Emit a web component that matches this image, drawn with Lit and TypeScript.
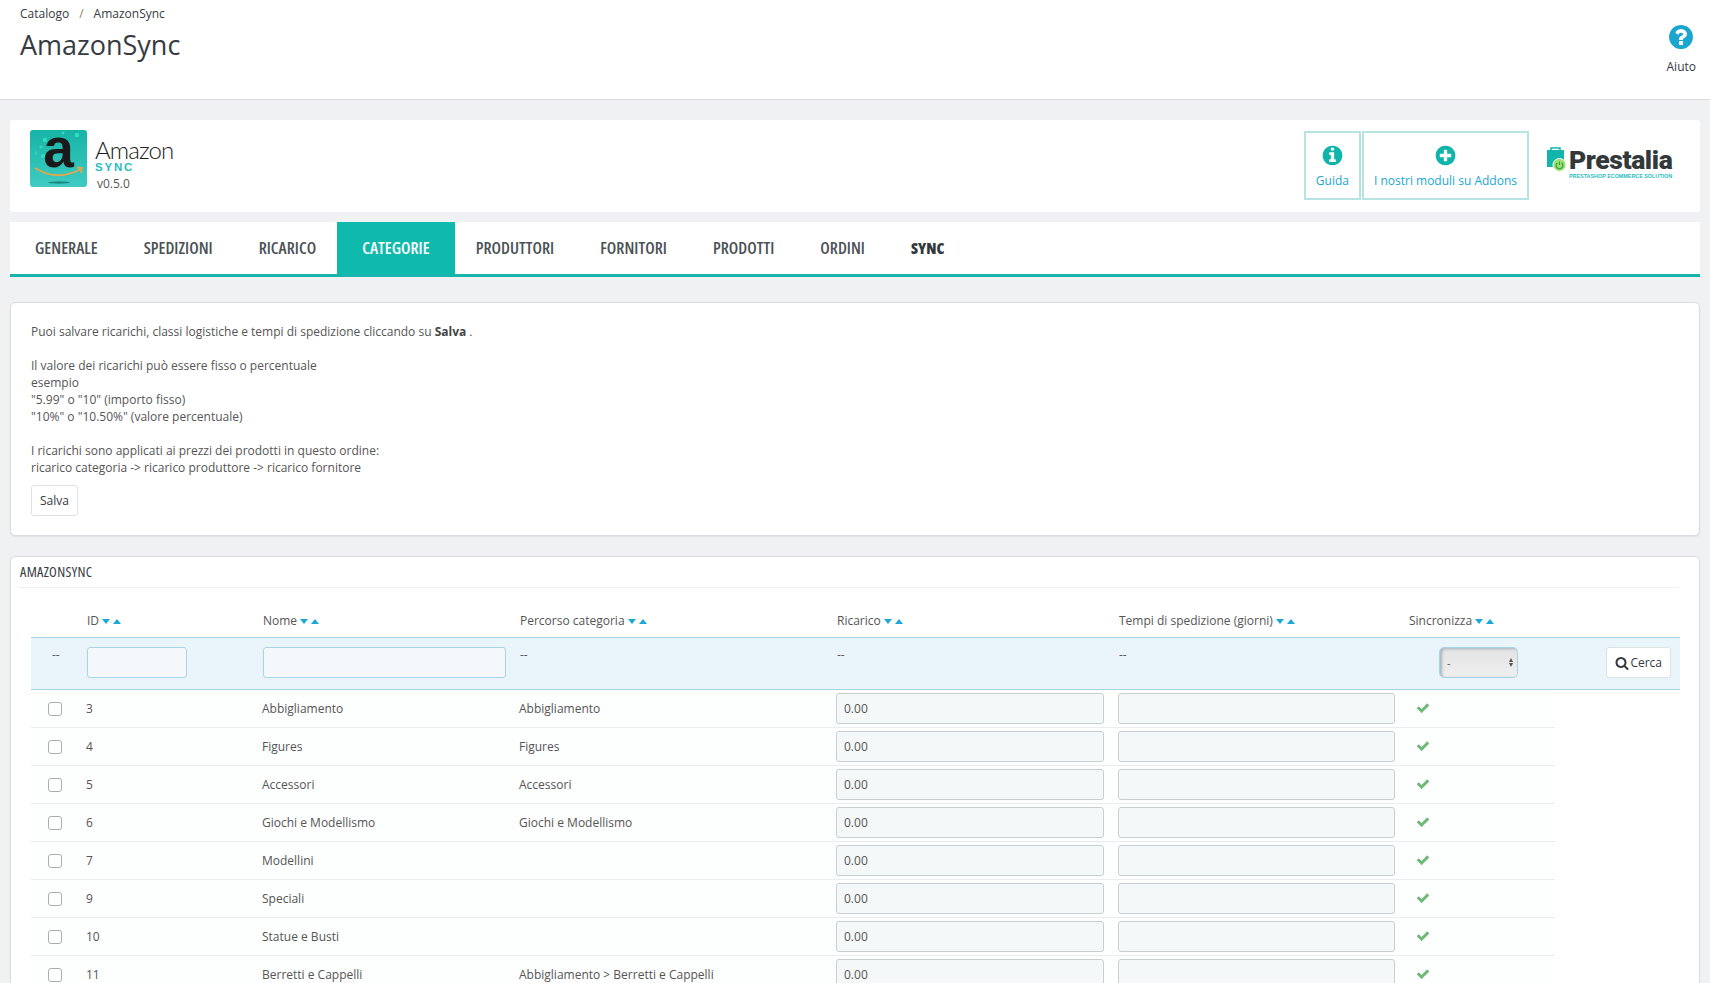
import { LitElement, html, css, svg } from 'lit';
import { customElement } from 'lit/decorators.js';

const ICONS = {
  check: 'M1671 566q0 40-28 68l-724 724-136 136q-28 28-68 28t-68-28l-136-136-362-362q-28-28-28-68t28-68l136-136q28-28 68-28t68 28l294 295 656-657q28-28 68-28t68 28l136 136q28 28 28 68z',
  search: 'M1216 832q0-185-131.5-316.5t-316.5-131.5-316.5 131.5-131.5 316.5 131.5 316.5 316.5 131.5 316.5-131.5 131.5-316.5zm512 832q0 52-38 90t-90 38q-54 0-90-38l-343-342q-179 124-399 124-143 0-273.5-55.5t-225-150-150-225-55.5-273.5 55.5-273.5 150-225 225-150 273.5-55.5 273.5 55.5 225 150 150 225 55.5 273.5q0 220-124 399l343 343q37 37 37 90z',
  plus: 'M1344 960v-128q0-26-19-45t-45-19h-256v-256q0-26-19-45t-45-19h-128q-26 0-45 19t-19 45v256h-256q-26 0-45 19t-19 45v128q0 26 19 45t45 19h256v256q0 26 19 45t45 19h128q26 0 45-19t19-45v-256h256q26 0 45-19t19-45zm320-64q0 209-103 385.5t-279.5 279.5-385.5 103-385.5-103-279.5-279.5-103-385.5 103-385.5 279.5-279.5 385.5-103 385.5 103 279.5 279.5 103 385.5z',
  info: 'M1152 1376v-160q0-14-9-23t-23-9h-96v-512q0-14-9-23t-23-9h-320q-14 0-23 9t-9 23v160q0 14 9 23t23 9h96v320h-96q-14 0-23 9t-9 23v160q0 14 9 23t23 9h448q14 0 23-9t9-23zm-128-896v-160q0-14-9-23t-23-9h-192q-14 0-23 9t-9 23v160q0 14 9 23t23 9h192q14 0 23-9t9-23zm640 416q0 209-103 385.5t-279.5 279.5-385.5 103-385.5-103-279.5-279.5-103-385.5 103-385.5 279.5-279.5 385.5-103 385.5 103 279.5 279.5 103 385.5z',
  question: 'M1024 1376v-192q0-14-9-23t-23-9h-192q-14 0-23 9t-9 23v192q0 14 9 23t23 9h192q14 0 23-9t9-23zm256-672q0-88-55.5-163t-138.5-116-170-41q-243 0-371 213-15 24 8 42l132 100q7 6 19 6 16 0 25-12 53-68 86-92 34-24 86-24 48 0 85.5 26t37.5 59q0 38-20 61t-68 45q-63 28-115.5 86.5t-52.5 125.5v36q0 14 9 23t23 9h192q14 0 23-9t9-23q0-19 21.5-49.5t54.5-49.5q32-18 49-28.5t46-35 44.5-48 28-60.5 12.5-81zm384 192q0 209-103 385.5t-279.5 279.5-385.5 103-385.5-103-279.5-279.5-103-385.5 103-385.5 279.5-279.5 385.5-103 385.5 103 279.5 279.5 103 385.5z',
};

const icon = (name: keyof typeof ICONS, size: number) => html`
  <svg width=${size} height=${size} viewBox="0 0 1792 1792" fill="currentColor"><path d=${ICONS[name]}></path></svg>`;

const TABS = ['GENERALE', 'SPEDIZIONI', 'RICARICO', 'CATEGORIE', 'PRODUTTORI', 'FORNITORI', 'PRODOTTI', 'ORDINI', 'SYNC'];

const COLS = [
  { label: '', w: 49 },
  { label: 'ID', w: 176 },
  { label: 'Nome', w: 257 },
  { label: 'Percorso categoria', w: 317 },
  { label: 'Ricarico', w: 282 },
  { label: 'Tempi di spedizione (giorni)', w: 290 },
  { label: 'Sincronizza', w: 153 },
  { label: '', w: 125 },
];

const ROWS = [
  ['3', 'Abbigliamento', 'Abbigliamento'],
  ['4', 'Figures', 'Figures'],
  ['5', 'Accessori', 'Accessori'],
  ['6', 'Giochi e Modellismo', 'Giochi e Modellismo'],
  ['7', 'Modellini', ''],
  ['9', 'Speciali', ''],
  ['10', 'Statue e Busti', ''],
  ['11', 'Berretti e Cappelli', 'Abbigliamento > Berretti e Cappelli'],
];

@customElement('app-root')
export class AppRoot extends LitElement {
  static styles = css`
    :host {
      display: block;
      height: 983px;
      overflow: hidden;
      background: #eff1f2;
      font-family: 'Open Sans', sans-serif;
      font-size: 12px;
      color: #555;
    }
    .head {
      background: #fff;
      height: 99px;
      border-bottom: 1px solid #d9dcde;
      display: flex;
      justify-content: space-between;
      padding: 0 14px 0 20px;
    }
    .crumb {
      margin-top: 6px;
      line-height: 16px;
      color: #363a41;
      display: flex;
      gap: 10px;
    }
    .crumb i { font-style: normal; color: #7a8a5a; }
    h1 {
      margin: 3px 0 0;
      font-size: 27px;
      line-height: 40px;
      font-weight: 400;
      color: #363a41;
    }
    .help {
      display: flex;
      flex-direction: column;
      align-items: center;
      padding-top: 23px;
      color: #363a41;
      gap: 8px;
      line-height: 16px;
    }
    .help svg { color: #1ba6cf; display: block; }
    .brand {
      box-sizing: border-box;
      margin: 20px 10px 0;
      height: 92px;
      background: #fff;
      border-radius: 3px;
      display: flex;
      align-items: flex-start;
      padding: 10px 28px 0 20px;
    }
    .logo { position: relative; width: 57px; height: 57px; margin-right: 8px; flex-shrink: 0; }
    .logo svg { display: block; }
    .logo span {
      position: absolute;
      left: 0;
      top: 0;
      width: 57px;
      text-align: center;
      font: 700 55px/36px 'Liberation Sans', sans-serif;
      color: #1a1a1a;
    }
    .name { margin-top: 7px; color: #222; }
    .name b { display: block; font: 300 24px/26px Lato, sans-serif; letter-spacing: -0.9px; }
    .name em {
      display: block;
      font: 700 11.5px/11px 'Liberation Sans', sans-serif;
      letter-spacing: 1.8px;
      color: #2bbcc0;
      margin-top: -1px;
    }
    .name span { display: block; font-size: 12px; line-height: 16px; color: #555; margin: 3px 0 0 2px; }
    .links { margin-left: auto; display: flex; gap: 1px; padding-top: 1px; }
    .links a {
      box-sizing: border-box;
      height: 69px;
      border: 2px solid #b8e3e3;
      display: flex;
      flex-direction: column;
      align-items: center;
      padding: 11px 10px 0;
      color: #1ba6cf;
      gap: 5px;
      line-height: 18px;
    }
    .links svg { color: #0fb5aa; display: block; }
    .presta { margin: 17px 0 0 18px; width: 125px; }
    .presta .top { display: flex; align-items: flex-end; height: 25px; }
    .presta .top svg { flex-shrink: 0; margin-right: 2px; }
    .presta strong {
      font: 900 26.5px/24px Roboto, sans-serif;
      color: #33383a;
      letter-spacing: -0.4px;
    }
    .presta small {
      display: block;
      font: 700 5.4px/8px 'Liberation Sans', sans-serif;
      color: #2bbcc0;
      margin: 0 0 0 22px;
      white-space: nowrap;
    }
    .tabs {
      margin: 10px 10px 0;
      height: 52px;
      background: #fff;
      border-bottom: 3px solid #17b5ac;
      display: flex;
      padding-left: 2px;
    }
    .tabs a {
      font: 600 16.7px/52px 'Open Sans', sans-serif;
      font-stretch: 75%;
      letter-spacing: 0.02px;
      color: #4b5155;
      padding: 0 23px;
    }
    .tabs a.on { background: #0fb9ab; color: #fff; padding: 0 25px; margin: 0 -2px; }
    .tabs a.sync { color: #33383a; font-weight: 800; font-size: 15.6px; }
    .panel {
      margin: 25px 10px 0;
      background: #fff;
      border: 1px solid #d9dcde;
      border-radius: 5px;
      box-shadow: 0 1px 1px #e1e3e5;
    }
    .note { height: 234px; padding: 20px 20px 0; box-sizing: border-box; line-height: 17px; }
    .note p { margin: 0 0 17px; }
    .note b { color: #444; }
    .btn {
      display: inline-flex;
      align-items: center;
      gap: 3px;
      height: 31px;
      box-sizing: border-box;
      padding: 0 8px;
      background: #fff;
      border: 1px solid #dfe2e4;
      border-radius: 3px;
      color: #363a41;
      font: inherit;
    }
    .note .btn { display: flex; margin-top: -8px; }
    .list { margin-top: 20px; padding: 0 20px 0 8px; height: 440px; }
    .list h2 {
      margin: 0;
      padding-left: 1px;
      height: 30px;
      border-bottom: 1px solid #eef0f1;
      font: 500 14.2px/29px 'Open Sans', sans-serif;
      font-stretch: 75%;
      letter-spacing: 0.35px;
      color: #363a41;
    }
    table {
      table-layout: fixed;
      border-collapse: collapse;
      width: 1649px;
      margin: 8px 0 0 12px;
    }
    th { font-weight: 400; text-align: left; height: 34px; padding: 7px 0 0 7px; vertical-align: middle; color: #555; white-space: nowrap; }
    .sort { display: inline-flex; gap: 3px; margin-left: 3px; vertical-align: 1px; }
    .sort i { width: 0; height: 0; border: 4.5px solid transparent; }
    .sort i:first-child { border-top: 5px solid #1aa9d6; border-bottom: 0; }
    .sort i:last-child { border-bottom: 5px solid #1aa9d6; border-top: 0; }
    .filter td {
      background: #e9f5fa;
      border-top: 1px solid #a8d3e3;
      border-bottom: 1px solid #a8d3e3;
      height: 51px;
      padding: 0 0 0 7px;
      vertical-align: top;
    }
    .filter .dash { display: block; padding-top: 9px; line-height: 16px; color: #555; }
    .filter input {
      display: block;
      box-sizing: border-box;
      height: 31px;
      margin-top: 9px;
      background: #f4f8fa;
      border: 1px solid #a9d4e6;
      border-radius: 3px;
    }
    .sel {
      box-sizing: border-box;
      width: 79px;
      height: 31px;
      margin: 9px 0 0 30px;
      border: 1px solid #a9d4e6;
      border-radius: 5px;
      background: linear-gradient(#e3e3e3, #efefef);
      box-shadow: inset 2px 1px 3px #a9b4bc;
      display: flex;
      align-items: center;
      justify-content: space-between;
      padding: 0 4px 0 7px;
      font-size: 11px;
    }
    .sel span { display: flex; flex-direction: column; gap: 1px; }
    .sel i { width: 0; height: 0; border: 2.5px solid transparent; }
    .sel i:first-child { border-bottom: 4px solid #555; border-top: 0; }
    .sel i:last-child { border-top: 4px solid #555; border-bottom: 0; }
    .filter .go { text-align: right; padding-right: 9px; }
    .go .btn { margin-top: 9px; height: 31px; padding: 0 8px; gap: 1px; }
    .go svg { color: #363a41; display: block; }
    tbody tr.row td {
      height: 37px;
      padding: 0 0 0 6px;
      border-bottom: 1px solid #eaedef;
      background: #fdfefe;
      vertical-align: middle;
    }
    .cb {
      display: block;
      width: 12px;
      height: 12px;
      margin: 0 0 0 11px;
      border: 1px solid #a9aeb2;
      border-radius: 3px;
      background: #fff;
    }
    .cell {
      display: block;
      box-sizing: border-box;
      height: 31px;
      width: 100%;
      padding: 0 7px;
      line-height: 29px;
      background: #f5f8f9;
      border: 1px solid #c8ced2;
      border-radius: 3px;
      color: #555;
    }
    .ok { display: block; color: #6fba7a; margin: 2px 0 0 8px; }
  `;

  private sortMark() {
    return html`<span class="sort"><i></i><i></i></span>`;
  }

  private renderLogo() {
    return svg`
      <defs>
        <linearGradient id="lg" x1="0" y1="0" x2="0" y2="1">
          <stop offset="0" stop-color="#17b4a6"></stop>
          <stop offset="1" stop-color="#3fcbc3"></stop>
        </linearGradient>
      </defs>
      <rect width="57" height="57" rx="3" fill="url(#lg)"></rect>
      <circle cx="15" cy="10" r="2.2" fill="#2fe0c0"></circle>
      <circle cx="6" cy="23" r="1.8" fill="#2fd0c0"></circle>
      <circle cx="13" cy="26" r="2" fill="#2fe0c0"></circle>
      <circle cx="11" cy="17" r="1.6" fill="#2fd8c0"></circle>
      <circle cx="47" cy="5" r="2.2" fill="#2fe0c0"></circle>
      <circle cx="33" cy="3" r="1.4" fill="#2fdcc0"></circle>
      <path d="M5 38 Q27 52 51 39 M47 37.5 L52 38 L51 43" fill="none" stroke="#e0a84a" stroke-width="1.8"></path>
      <ellipse cx="29" cy="52.5" rx="11" ry="1.2" fill="#0b6e68" opacity=".7"></ellipse>`;
  }

  render() {
    return html`
      <div class="head">
        <div>
          <div class="crumb"><span>Catalogo</span><i>/</i><span>AmazonSync</span></div>
          <h1>AmazonSync</h1>
        </div>
        <div class="help">${icon('question', 28)}<span>Aiuto</span></div>
      </div>

      <div class="brand">
        <div class="logo">
          <svg width="57" height="57" viewBox="0 0 57 57">${this.renderLogo()}</svg>
          <span>a</span>
        </div>
        <div class="name">
          <b>Amazon</b>
          <em>SYNC</em>
          <span>v0.5.0</span>
        </div>
        <div class="links">
          <a>${icon('info', 23)}<span>Guida</span></a>
          <a>${icon('plus', 23)}<span>I nostri moduli su Addons</span></a>
        </div>
        <div class="presta">
          <div class="top">
            <svg width="20" height="25" viewBox="0 0 20 25">
              <rect x="0" y="3" width="17" height="17" fill="#12b5ab"></rect>
              <path d="M4 3 V1 H13 V3" fill="none" stroke="#12b5ab" stroke-width="1.5"></path>
              <circle cx="12.5" cy="18" r="6.5" fill="#9ae06a" stroke="#fff" stroke-width="1"></circle>
              <path d="M12.5 14.5 V18 M10.2 15.8 A3.4 3.4 0 1 0 14.8 15.8" fill="none" stroke="#2a9a4a" stroke-width="1.1"></path>
            </svg>
            <strong>Prestalia</strong>
          </div>
          <small>PRESTASHOP ECOMMERCE SOLUTION</small>
        </div>
      </div>

      <nav class="tabs">
        ${TABS.map(t => html`<a class=${t === 'CATEGORIE' ? 'on' : t === 'SYNC' ? 'sync' : ''}>${t}</a>`)}
      </nav>

      <div class="panel note">
        <p>Puoi salvare ricarichi, classi logistiche e tempi di spedizione cliccando su <b>Salva</b> .</p>
        <p>Il valore dei ricarichi può essere fisso o percentuale<br>esempio<br>"5.99" o "10" (importo fisso)<br>"10%" o "10.50%" (valore percentuale)</p>
        <p>I ricarichi sono applicati ai prezzi dei prodotti in questo ordine:<br>ricarico categoria -&gt; ricarico produttore -&gt; ricarico fornitore</p>
        <button class="btn">Salva</button>
      </div>

      <div class="panel list">
        <h2>AMAZONSYNC</h2>
        <table>
          <colgroup>${COLS.map(c => html`<col style="width:${c.w}px">`)}</colgroup>
          <thead>
            <tr>
              ${COLS.map(c => html`<th>${c.label}${c.label ? this.sortMark() : ''}</th>`)}
            </tr>
            <tr class="filter">
              <td><span class="dash" style="padding-left:14px">--</span></td>
              <td><input style="width:100px"></td>
              <td><input style="width:243px"></td>
              <td><span class="dash">--</span></td>
              <td><span class="dash">--</span></td>
              <td><span class="dash">--</span></td>
              <td><div class="sel">-<span><i></i><i></i></span></div></td>
              <td class="go"><button class="btn">${icon('search', 14)}Cerca</button></td>
            </tr>
          </thead>
          <tbody>
            ${ROWS.map(r => html`
              <tr class="row">
                <td><span class="cb"></span></td>
                <td>${r[0]}</td>
                <td>${r[1]}</td>
                <td>${r[2]}</td>
                <td><span class="cell" style="width:268px">0.00</span></td>
                <td><span class="cell" style="width:277px"></span></td>
                <td><span class="ok">${icon('check', 14)}</span></td>
              </tr>`)}
          </tbody>
        </table>
      </div>
    `;
  }
}
